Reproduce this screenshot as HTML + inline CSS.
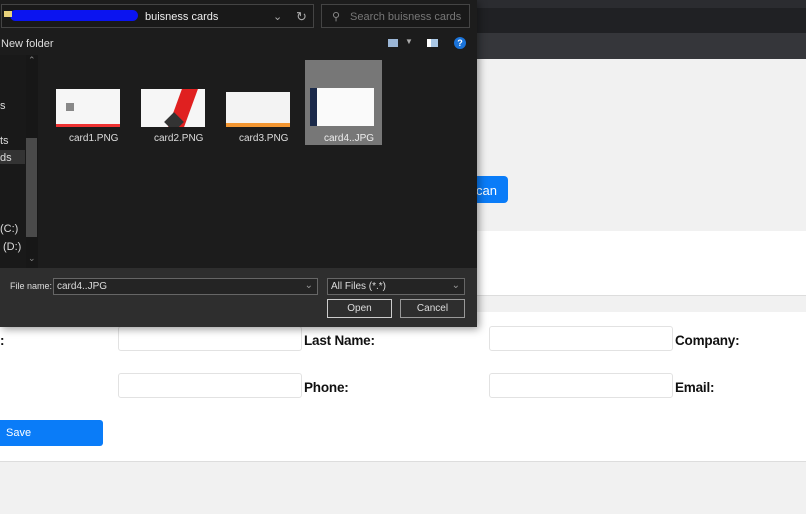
<!DOCTYPE html>
<html><head><style>
*{margin:0;padding:0;box-sizing:border-box}
body{width:806px;height:514px;overflow:hidden;background:#f1f1f1;font-family:"Liberation Sans",sans-serif;position:relative}
.a{position:absolute}
.lbl{font-weight:bold;font-size:13.5px;color:#111;letter-spacing:-0.2px}
.inp{position:absolute;background:#fff;border:1px solid #e2e2e2;border-radius:3px;height:25px}
.d{color:#ddd;font-size:11px;white-space:nowrap}
</style></head><body>
<div class="a" style="left:0;top:0;width:806px;height:8px;background:#2b2c30"></div>
<div class="a" style="left:0;top:8px;width:806px;height:25px;background:#202124"></div>
<div class="a" style="left:0;top:33px;width:806px;height:26px;background:#35363a"></div>
<div class="a" style="left:0;top:231px;width:806px;height:65px;background:#fff;border-bottom:1px solid #ddd"></div>
<div class="a" style="left:0;top:312px;width:806px;height:150px;background:#fff;border-bottom:1px solid #ddd"></div>
<div class="a" style="left:440px;top:176px;width:68px;height:27px;background:#0a7cf8;border-radius:4px;color:#fff;font-size:13px;padding:7px 0 0 36px">can</div>
<div class="a lbl" style="left:0;top:333px">:</div>
<div class="inp" style="left:118px;top:326px;width:184px"></div>
<div class="a lbl" style="left:304px;top:333px">Last Name:</div>
<div class="inp" style="left:489px;top:326px;width:184px"></div>
<div class="a lbl" style="left:675px;top:333px">Company:</div>
<div class="inp" style="left:118px;top:373px;width:184px"></div>
<div class="a lbl" style="left:304px;top:380px">Phone:</div>
<div class="inp" style="left:489px;top:373px;width:184px"></div>
<div class="a lbl" style="left:675px;top:380px">Email:</div>
<div class="a" style="left:0;top:420px;width:103px;height:26px;background:#0a7cf8;border-radius:0 3px 3px 0;color:#fff;font-size:11px;padding:7px 0 0 6px">Save</div>

<div class="a" style="left:0;top:0;width:477px;height:327px;background:#1c1c1c;box-shadow:2px 2px 8px rgba(0,0,0,.4)">
 <div class="a" style="left:1px;top:4px;width:313px;height:24px;border:1px solid #444;background:#191919"></div>
 <div class="a" style="left:10px;top:10px;width:128px;height:11px;background:#0b14f0;border-radius:6px"></div>
 <div class="a" style="left:4px;top:11px;width:8px;height:6px;background:#e8d27a"></div>
 <div class="a d" style="left:145px;top:11px;color:#eee">buisness cards</div>
 <div class="a d" style="left:273px;top:10px;color:#aaa">&#8964;</div>
 <div class="a d" style="left:296px;top:9px;color:#aaa;font-size:13px">&#8635;</div>
 <div class="a" style="left:321px;top:4px;width:149px;height:24px;border:1px solid #444;background:#191919"></div>
 <div class="a d" style="left:332px;top:10px;color:#888">&#9906;</div>
 <div class="a d" style="left:350px;top:11px;color:#777">Search buisness cards</div>
 <div class="a d" style="left:1px;top:38px;color:#ddd">New folder</div>
 <div class="a" style="left:388px;top:39px;width:10px;height:8px;background:#9bb6d6"></div>
 <div class="a d" style="left:405px;top:37px;color:#aaa;font-size:8px">&#9660;</div>
 <div class="a" style="left:427px;top:39px;width:11px;height:8px;background:#aac8e6;border-left:4px solid #fff"></div>
 <div class="a" style="left:454px;top:37px;width:12px;height:12px;border-radius:50%;background:#1a73d9;color:#fff;font-size:9px;text-align:center;font-weight:bold;line-height:12px">?</div>
 <div class="a" style="left:0;top:55px;width:38px;height:213px;background:#191919"></div>
 <div class="a" style="left:26px;top:55px;width:12px;height:213px;background:#171717"></div>
 <div class="a" style="left:26px;top:138px;width:11px;height:99px;background:#4a4a4a"></div>
 <div class="a" style="left:0;top:150px;width:25px;height:14px;background:#333"></div>
 <div class="a d" style="left:28px;top:55px;color:#888;font-size:9px">&#8963;</div>
 <div class="a d" style="left:28px;top:253px;color:#888;font-size:9px">&#8964;</div>
 <div class="a d" style="left:0;top:100px">s</div>
 <div class="a d" style="left:0;top:135px">ts</div>
 <div class="a d" style="left:0;top:152px">ds</div>
 <div class="a d" style="left:0;top:223px">(C:)</div>
 <div class="a d" style="left:3px;top:241px">(D:)</div>
 <div class="a" style="left:305px;top:60px;width:77px;height:85px;background:#777"></div>
 <div class="a" style="left:56px;top:89px;width:64px;height:38px;background:#f6f6f6;border-bottom:3px solid #e33"><div class="a" style="left:10px;top:14px;width:8px;height:8px;background:#888"></div></div>
 <div class="a" style="left:141px;top:89px;width:64px;height:38px;background:#f6f6f6;overflow:hidden"><div class="a" style="left:34px;top:0;width:16px;height:38px;background:#e02020;transform:skewX(-20deg)"></div><div class="a" style="left:26px;top:26px;width:14px;height:14px;background:#333;transform:rotate(45deg)"></div></div>
 <div class="a" style="left:226px;top:92px;width:64px;height:35px;background:#f3f3f3;border-bottom:4px solid #f29632"></div>
 <div class="a" style="left:310px;top:88px;width:64px;height:38px;background:#fafafa;border-left:7px solid #1b2a4a"></div>
 <div class="a d" style="left:69px;top:133px;font-size:10px">card1.PNG</div>
 <div class="a d" style="left:154px;top:133px;font-size:10px">card2.PNG</div>
 <div class="a d" style="left:239px;top:133px;font-size:10px">card3.PNG</div>
 <div class="a d" style="left:324px;top:133px;font-size:10px;color:#eee">card4..JPG</div>
 <div class="a" style="left:0;top:268px;width:477px;height:59px;background:#2e2e2e"></div>
 <div class="a d" style="left:10px;top:281px;font-size:9px">File name:</div>
 <div class="a" style="left:53px;top:278px;width:265px;height:17px;border:1px solid #666;background:#242424;color:#ddd;font-size:10px;padding:2px 3px">card4..JPG<span style="position:absolute;right:4px;top:1px;color:#999">&#8964;</span></div>
 <div class="a" style="left:327px;top:278px;width:138px;height:17px;border:1px solid #666;background:#242424;color:#ddd;font-size:10px;padding:2px 3px">All Files (*.*)<span style="position:absolute;right:4px;top:1px;color:#999">&#8964;</span></div>
 <div class="a" style="left:327px;top:299px;width:65px;height:19px;border:1px solid #ccc;background:#2e2e2e;color:#ddd;font-size:10px;text-align:center;line-height:17px">Open</div>
 <div class="a" style="left:400px;top:299px;width:65px;height:19px;border:1px solid #999;background:#2e2e2e;color:#ddd;font-size:10px;text-align:center;line-height:17px">Cancel</div>
</div>
</body></html>
